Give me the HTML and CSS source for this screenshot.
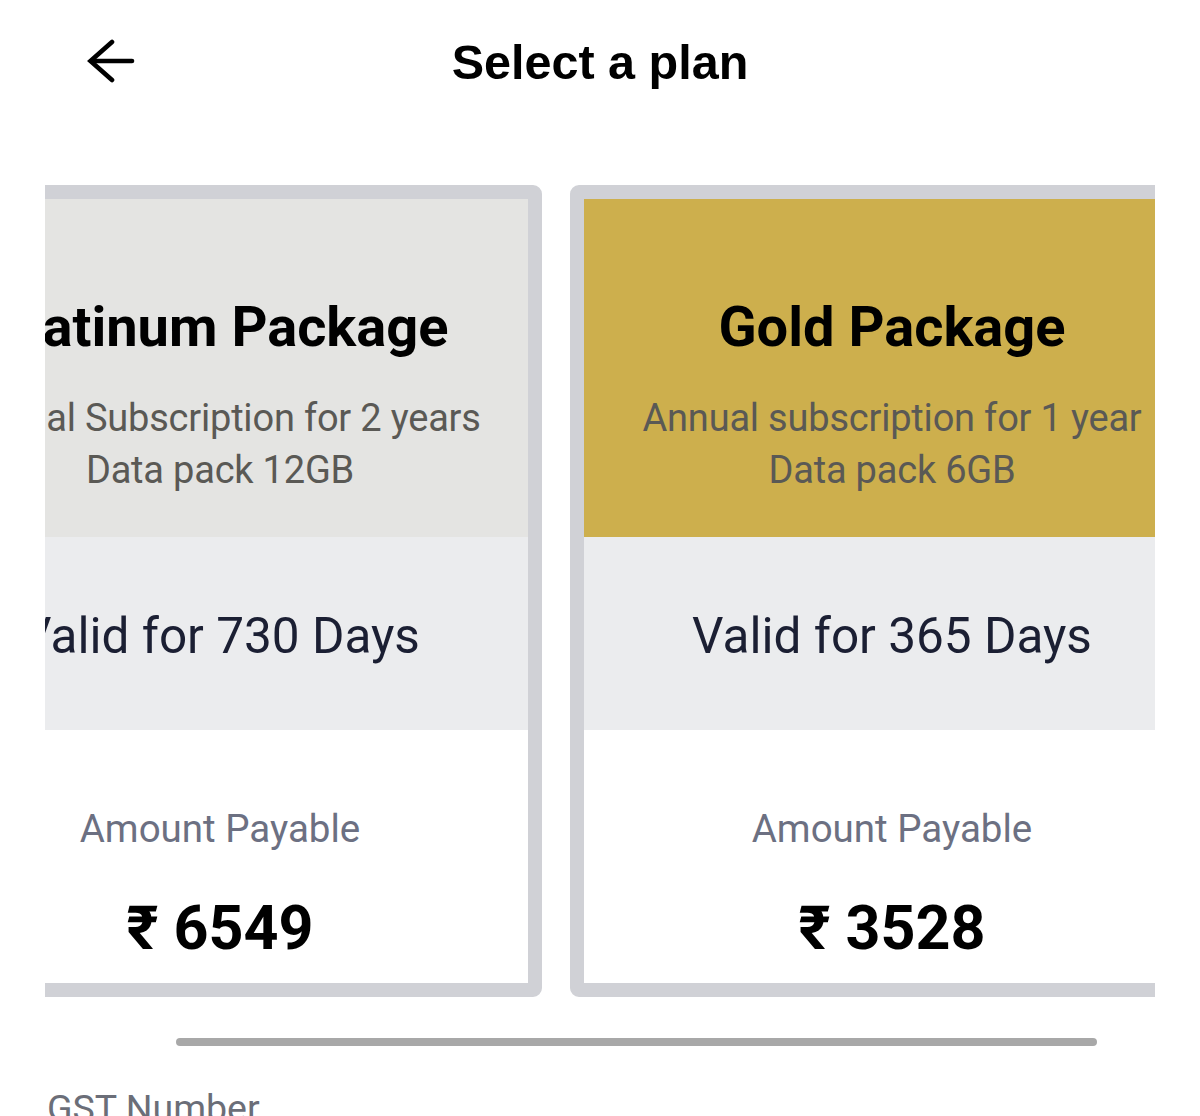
FILE: index.html
```html
<!DOCTYPE html>
<html lang="en">
<head>
<meta charset="utf-8">
<title>Select a plan</title>
<link rel="stylesheet" href="styles.css">
</head>
<body>
  <header class="topbar">
    <button class="back" aria-label="Back">
      <svg width="50" height="44" viewBox="0 0 50 44" fill="none" stroke="#000" stroke-width="4.6" stroke-linecap="round" stroke-linejoin="miter">
        <path d="M4 22 H45"/>
        <path d="M25 3 L3.5 22 L25 41"/>
      </svg>
    </button>
    <h1 class="title">Select a plan</h1>
  </header>

  <section class="plans">
    <div class="track">
      <article class="card">
        <div class="card-head head-platinum">
          <h2 class="pkg-name">Platinum Package</h2>
          <p class="pkg-desc">Annual Subscription for 2 years<br>Data pack 12GB</p>
        </div>
        <div class="card-valid">Valid for 730 Days</div>
        <div class="card-price">
          <div class="price-label">Amount Payable</div>
          <div class="price-value">₹ 6549</div>
        </div>
      </article>
      <article class="card">
        <div class="card-head head-gold">
          <h2 class="pkg-name">Gold Package</h2>
          <p class="pkg-desc">Annual subscription for 1 year<br>Data pack 6GB</p>
        </div>
        <div class="card-valid">Valid for 365 Days</div>
        <div class="card-price">
          <div class="price-label">Amount Payable</div>
          <div class="price-value">₹ 3528</div>
        </div>
      </article>
    </div>
  </section>

  <div class="scroll-indicator"><div class="scroll-thumb"></div></div>

  <div class="gst-label">GST Number</div>
</body>
</html>
```

FILE: styles.css
```css
html, body {
  margin: 0;
  padding: 0;
  background: #ffffff;
}

body {
  font-family: Roboto, "Noto Sans", "DejaVu Sans", sans-serif;
  height: 1116px;
  overflow: hidden;
}

.topbar {
  height: 124px;
  display: flex;
  align-items: center;
  justify-content: center;
  position: relative;
}

.back {
  position: absolute;
  left: 87px;
  top: 39px;
  width: 50px;
  height: 44px;
  padding: 0;
  border: 0;
  background: none;
  display: flex;
}

.title {
  margin: 0;
  font-family: "Liberation Sans", Arial, sans-serif;
  font-weight: 700;
  font-size: 48.5px;
  line-height: 56px;
  color: #000;
}

.plans {
  margin: 61px 45px 0 45px;
  overflow: hidden;
}

.track {
  display: flex;
  gap: 28px;
  margin-left: -147px;
  width: max-content;
}

.card {
  width: 616px;
  border: 14px solid #d0d1d6;
  border-radius: 9px;
  background: #ffffff;
  display: flex;
  flex-direction: column;
  text-align: center;
}

.card-head {
  height: 338px;
  box-sizing: border-box;
  padding-top: 96px;
}

.head-platinum { background: #e4e4e2; }
.head-gold { background: #cdaf4d; }

.pkg-name {
  margin: 0;
  font-weight: 700;
  font-size: 56px;
  line-height: 64px;
  color: #000;
  white-space: nowrap;
}

.pkg-desc {
  margin: 33px 0 0 0;
  font-size: 38px;
  line-height: 52px;
  color: #5a5955;
  white-space: nowrap;
  letter-spacing: -0.2px;
}

.card-valid {
  height: 193px;
  background: #ebecee;
  display: flex;
  align-items: center;
  justify-content: center;
  font-size: 49.5px;
  color: #1b1f33;
  white-space: nowrap;
  padding-top: 4px;
  box-sizing: border-box;
}

.card-price {
  height: 253px;
  box-sizing: border-box;
  padding-top: 73px;
}

.price-label {
  font-size: 38.5px;
  line-height: 52px;
  color: #6c7082;
}

.price-value {
  margin-top: 37px;
  font-weight: 700;
  font-size: 61px;
  line-height: 72px;
  color: #000;
}

.scroll-indicator {
  margin: 41px 0 0 176px;
  width: 921px;
}

.scroll-thumb {
  height: 8px;
  border-radius: 4px;
  background: #a8a8a8;
}

.gst-label {
  margin: 40px 0 0 47px;
  font-size: 37.5px;
  line-height: 44px;
  color: #6b6e78;
}
```
